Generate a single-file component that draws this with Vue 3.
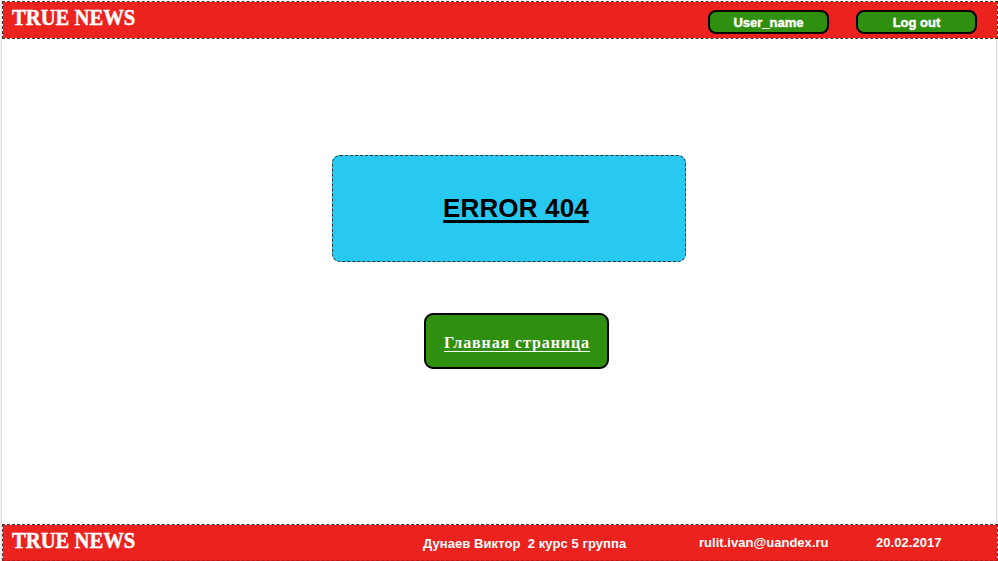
<script setup>
const actions = ['User_name', 'Log out']
</script>

<template>
  <div class="page">
    <header class="bar header">
      <span class="logo">TRUE NEWS</span>
      <nav class="actions">
        <button v-for="label in actions" :key="label" class="action"><span>{{ label }}</span></button>
      </nav>
    </header>
    <main class="content">
      <section class="error"><h1>ERROR 404</h1></section>
      <a class="home"><span>Главная страница</span></a>
    </main>
    <footer class="bar footer">
      <span class="logo">TRUE NEWS</span>
      <span class="author">Дунаев Виктор&nbsp; 2 курс 5 группа</span>
      <span class="email">rulit.ivan@uandex.ru</span>
      <span class="date">20.02.2017</span>
    </footer>
  </div>
</template>

<style>
body {
  background: #fff;
  overflow: hidden;
}
</style>

<style scoped>
.page {
  box-sizing: border-box;
  width: 998px;
  height: 561px;
  padding: 1px 0 0 2px;
  display: flex;
  flex-direction: column;
  background: linear-gradient(90deg, #f1f1f1 1px, #e2e2e2 1px, #e2e2e2 2px, #fff 2px, #fff 996px, #e2e2e2 996px, #e2e2e2 997px, #f1f1f1 997px);
  font-family: "Liberation Sans", sans-serif;
  overflow: hidden;
}
.bar {
  box-sizing: border-box;
  display: flex;
  flex: none;
  width: 996px;
  height: 38px;
  border: 1px dashed #4a3434;
  background: #eb221d;
  background-clip: padding-box;
  color: #fff;
  white-space: nowrap;
}
.footer {
  height: 37px;
  border-bottom-color: #b81c18;
  background: linear-gradient(#eb221d, #eb221d) padding-box, linear-gradient(#eb221d, #eb221d) bottom / 100% 1px no-repeat border-box;
  font: bold 13px/16px "Liberation Sans", sans-serif;
}
.logo {
  width: 123px;
  height: 28px;
  margin: 1px 0 0 9px;
  font: bold 24px/28px "Liberation Serif", serif;
  transform: scaleX(0.86);
  transform-origin: left;
  -webkit-text-stroke: 0.5px #fff;
}
.actions {
  display: flex;
  gap: 27px;
  margin: 8px 20px 0 auto;
}
.action {
  box-sizing: border-box;
  width: 121px;
  height: 24px;
  padding: 1px 0 0;
  border: 2px solid #000;
  border-radius: 8px;
  background: #2f900f;
  color: #fff;
  font: bold 13px/19px "Liberation Sans", sans-serif;
  -webkit-text-stroke: 0.4px #fff;
}
.content {
  flex: none;
  height: 485px;
  display: flex;
  flex-direction: column;
}
.error {
  box-sizing: border-box;
  width: 354px;
  height: 107px;
  margin: 116px 0 0 330px;
  border: 1px dashed #333;
  border-radius: 8px;
  background: #27c9f1;
}
h1 {
  width: 146px;
  height: 32px;
  margin: 36px 0 0 110px;
  padding: 0;
  font: bold 26px/32px "Liberation Sans", sans-serif;
  letter-spacing: 0.15px;
  white-space: nowrap;
  text-decoration: underline 3px;
  text-underline-offset: 3px;
}
.home {
  box-sizing: border-box;
  width: 185px;
  height: 56px;
  margin: 51px 0 0 422px;
  padding: 18px 0 0 18px;
  border: 2px solid #000;
  border-radius: 9px;
  background: #2f900f;
  color: #fff;
  font: bold 16px/20px "Liberation Serif", serif;
  letter-spacing: 0.9px;
  white-space: nowrap;
  text-decoration: underline 1px;
  text-underline-offset: 3px;
}
.author {
  width: 204px;
  margin: 11px 0 0 288px;
  letter-spacing: 0.07px;
}
.email {
  width: 130px;
  margin: 10px 0 0 72px;
  letter-spacing: 0.03px;
}
.date {
  margin: 10px 0 0 47px;
  letter-spacing: 0.05px;
}
</style>
